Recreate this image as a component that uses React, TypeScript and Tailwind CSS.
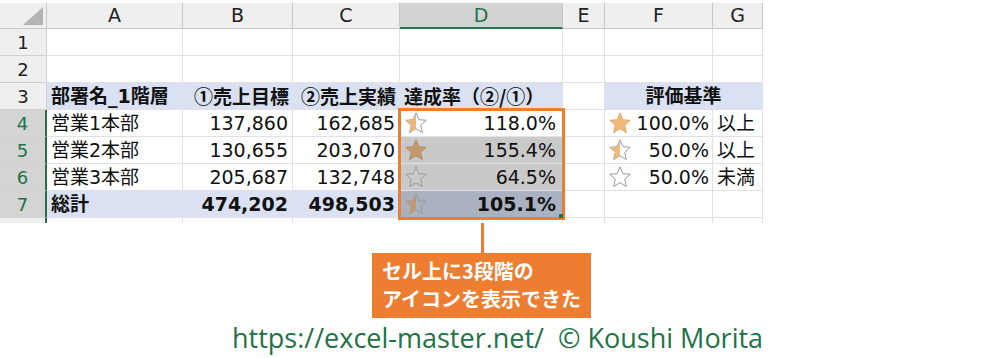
import React from 'react';

const font = { fontFamily: '"DejaVu Sans", "Noto Sans CJK JP", sans-serif' };
const cjk = { fontFamily: '"Noto Sans CJK JP", sans-serif' };

function Star({ kind, dark }: { kind: 'full' | 'half' | 'empty'; dark?: boolean }) {
  const pts = '12,1.8 14.9,8.7 22.3,9.3 16.7,14.2 18.4,21.6 12,17.7 5.6,21.6 7.3,14.2 1.7,9.3 9.1,8.7';
  const fill = dark ? '#c39a6e' : '#f0b77a';
  const id = dark ? 'hd' : 'hl';
  return (
    <svg width="24" height="24" viewBox="0 0 24 24" className="shrink-0">
      <defs>
        <clipPath id={id}>
          <rect x="0" y="0" width="12" height="24" />
        </clipPath>
      </defs>
      {kind === 'full' && <polygon points={pts} fill={fill} stroke={dark ? '#a9825a' : '#e0a060'} strokeWidth="0.8" />}
      {kind === 'half' && (
        <>
          <polygon points={pts} fill="none" stroke="#9a9a9a" strokeWidth="1" />
          <polygon points={pts} fill={fill} clipPath={`url(#${id})`} />
        </>
      )}
      {kind === 'empty' && <polygon points={pts} fill="none" stroke="#9a9a9a" strokeWidth="1" />}
    </svg>
  );
}

const cols = ['A', 'B', 'C', 'D', 'E', 'F', 'G'];

export default function App() {
  const cell = 'border-r border-b border-[#e2e2e2] flex items-center overflow-hidden whitespace-nowrap text-[19px] text-[#111]';
  const rh = 'border-r border-b border-[#d0d0d0] flex items-center justify-center text-[18px]';
  return (
    <div className="w-[1000px] h-[358px] bg-white relative overflow-hidden" style={font}>
      <div className="pt-[3px]">
        <div className="grid grid-cols-[47px_136px_110px_107px_163px_42px_108px_50px] grid-rows-[26px_27px_27px_27px_27px_27px_27px_27px_5px] w-[763px]">
          {/* header row */}
          <div className="bg-[#efefef] border-r border-b border-[#c8c8c8] relative">
            <div className="absolute right-[3px] bottom-[3px] w-0 h-0 border-l-[20px] border-l-transparent border-b-[18px] border-b-[#b4b4b4]" />
          </div>
          {cols.map((c) =>
            c === 'D' ? (
              <div key={c} className="bg-[#d3d3d3] border-r border-[#c8c8c8] border-b-2 border-b-[#217346] flex items-center justify-center text-[19px] text-[#217346]">
                {c}
              </div>
            ) : (
              <div key={c} className="bg-[#efefef] border-r border-b border-[#c8c8c8] flex items-center justify-center text-[19px] text-[#222]">
                {c}
              </div>
            )
          )}

          {/* row 1, 2 */}
          {[1, 2].map((r) => (
            <React.Fragment key={r}>
              <div className={`${rh} bg-[#efefef] text-[#222]`}>{r}</div>
              {cols.map((c) => (
                <div key={c} className={cell} />
              ))}
            </React.Fragment>
          ))}

          {/* row 3 */}
          <div className={`${rh} bg-[#efefef] text-[#222]`}>3</div>
          <div className={`${cell} bg-[#d9e1f2] font-bold pl-[4px] border-[#d9e1f2]`}>部署名_1階層</div>
          <div className={`${cell} bg-[#d9e1f2] font-bold justify-end pr-[3px] border-[#d9e1f2]`} style={cjk}>①売上目標</div>
          <div className={`${cell} bg-[#d9e1f2] font-bold justify-end pr-[3px] border-[#d9e1f2]`} style={cjk}>②売上実績</div>
          <div className={`${cell} bg-[#d9e1f2] font-bold pl-[4px] border-[#d9e1f2]`} style={cjk}>達成率（②/①）</div>
          <div className={cell} />
          <div className={`${cell} bg-[#d9e1f2] font-bold justify-center border-[#d9e1f2] col-span-2`}>評価基準</div>

          {/* rows 4-6 */}
          {[
            ['営業1本部', '137,860', '162,685', 'half', '118.0%', 'bg-white', 'full', '100.0%', '以上'],
            ['営業2本部', '130,655', '203,070', 'full', '155.4%', 'bg-[#c9c9c9]', 'half', '50.0%', '以上'],
            ['営業3本部', '205,687', '132,748', 'empty', '64.5%', 'bg-[#c9c9c9]', 'empty', '50.0%', '未満'],
          ].map((row, i) => (
            <React.Fragment key={i}>
              <div className={`${rh} bg-[#d4d4d4] text-[#217346] border-r-2 border-r-[#217346]`}>{i + 4}</div>
              <div className={`${cell} pl-[4px]`}>{row[0]}</div>
              <div className={`${cell} justify-end pr-[4px]`}>{row[1]}</div>
              <div className={`${cell} justify-end pr-[4px]`}>{row[2]}</div>
              <div className={`${cell} ${row[5]} justify-between pl-[4px] pr-[6px] border-[#b8b8b8]`}>
                <Star kind={row[3] as 'full'} dark={i > 0} />
                <span>{row[4]}</span>
              </div>
              <div className={cell} />
              <div className={`${cell} justify-between pl-[3px] pr-[3px]`}>
                <Star kind={row[6] as 'full'} />
                <span>{row[7]}</span>
              </div>
              <div className={`${cell} pl-[4px]`}>{row[8]}</div>
            </React.Fragment>
          ))}

          {/* row 7 */}
          <div className={`${rh} bg-[#d4d4d4] text-[#217346] border-r-2 border-r-[#217346]`}>7</div>
          <div className={`${cell} bg-[#d9e1f2] font-bold pl-[4px] border-[#d9e1f2]`}>総計</div>
          <div className={`${cell} bg-[#d9e1f2] font-bold justify-end pr-[4px] border-[#d9e1f2]`}>474,202</div>
          <div className={`${cell} bg-[#d9e1f2] font-bold justify-end pr-[4px] border-[#d9e1f2]`}>498,503</div>
          <div className={`${cell} bg-[#aab1c0] font-bold justify-between pl-[4px] pr-[6px] border-[#aab1c0]`}>
            <Star kind="half" dark />
            <span>105.1%</span>
          </div>
          <div className={cell} />
          <div className={cell} />
          <div className={cell} />

          {/* partial row 8 */}
          <div className="bg-[#efefef] border-r-2 border-r-[#217346]" />
          {cols.map((c) => (
            <div key={c} className="border-r border-[#e2e2e2]" />
          ))}
        </div>

        {/* callout */}
        <div className="ml-[481px] w-[3px] h-[30px] bg-[#ed7d31]" />
        <div className="ml-[372px] w-[219px] h-[65px] bg-[#ed7d31] text-white font-bold text-[20px] leading-[28px] pl-[10px] pt-[4px] whitespace-nowrap" style={cjk}>
          <div>セル上に3段階の</div>
          <div>アイコンを表示できた</div>
        </div>

        <div className="ml-[232px] mt-[4px] text-[27px] leading-[32px] text-[#217346] whitespace-nowrap" style={{ fontFamily: '"Open Sans", "Noto Sans", sans-serif' }}>
          https://excel-master.net/&nbsp;&nbsp;© Koushi Morita
        </div>
      </div>

      {/* selection outline */}
      <div className="absolute left-[398px] top-[108px] w-[167px] h-[112px] border-[3px] border-[#ed7d31] pointer-events-none">
        <div className="absolute right-[-1px] bottom-[-1px] w-[4px] h-[4px] bg-[#217346]" />
      </div>
    </div>
  );
}
